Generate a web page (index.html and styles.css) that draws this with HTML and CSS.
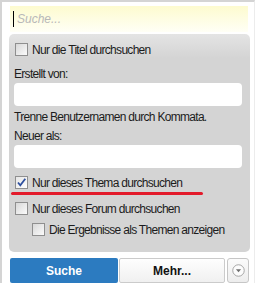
FILE: index.html
```html
<!DOCTYPE html>
<html>
<head>
<meta charset="utf-8">
<link rel="stylesheet" href="styles.css">
</head>
<body>
<div class="popup">
  <div class="search-field"><span class="caret"></span><span class="placeholder">Suche...</span></div>
  <div class="panel">
    <label class="row first"><span class="cb"></span>Nur die Titel durchsuchen</label>
    <div class="label">Erstellt von:</div>
    <div class="input"></div>
    <div class="hint">Trenne Benutzernamen durch Kommata.</div>
    <div class="label second">Neuer als:</div>
    <div class="input"></div>
    <label class="row checked-row"><span class="cb checked"><svg viewBox="0 0 13 13" width="13" height="13"><path d="M3 6.5 L5.3 9.3 L10.3 2.8" fill="none" stroke="#2d4f9e" stroke-width="1.8"/></svg></span>Nur dieses Thema durchsuchen</label>
    <div class="underline"></div>
    <label class="row forum"><span class="cb"></span>Nur dieses Forum durchsuchen</label>
    <label class="row indent"><span class="cb"></span>Die Ergebnisse als Themen anzeigen</label>
  </div>
  <div class="buttons">
    <div class="btn primary">Suche</div>
    <div class="btn secondary">Mehr...</div>
    <div class="btn arrow"><svg viewBox="0 0 14 14" width="13" height="13"><circle cx="7" cy="7" r="6.2" fill="#fcfcfc" stroke="#a0a0a0" stroke-width="1"/><path d="M4.2 5.6 L9.8 5.6 L7 8.8 Z" fill="#6e6e6e"/></svg></div>
  </div>
</div>
</body>
</html>
```
FILE: styles.css
```css
html, body {
  margin: 0;
  padding: 0;
  background: #fff;
}
body {
  font-family: "Liberation Sans", Arial, sans-serif;
  font-size: 12px;
  letter-spacing: -0.7px;
  color: #1c1c1c;
}
.popup {
  width: 255px;
  border-top: 2px solid #d4d4d4;
  border-left: 2px solid #d4d4d4;
  border-right: 1px solid #ececec;
  padding: 4px 0 0 7px;
  box-sizing: border-box;
  display: flex;
  flex-direction: column;
}
.popup > * {
  flex: none;
}
.search-field {
  width: 238px;
  height: 26px;
  margin-left: 1px;
  background: linear-gradient(#fdfbcf, #fffff6);
  display: flex;
  align-items: center;
  padding-left: 3px;
  box-sizing: border-box;
}
.caret {
  width: 1px;
  height: 16px;
  background: #000;
  margin-right: 3px;
}
.placeholder {
  font-style: italic;
  color: #b8b8b8;
  font-size: 12px;
  letter-spacing: 0;
}
.panel {
  width: 241px;
  box-sizing: border-box;
  margin-top: 2px;
  background: linear-gradient(#e4e4e4 0, #d4d4d4 24px, #d4d4d4 100%);
  border-radius: 5px;
  padding: 9px 8px 16px 5px;
  display: flex;
  flex-direction: column;
}
.row {
  display: flex;
  align-items: center;
  height: 13px;
}
.cb {
  width: 11px;
  height: 11px;
  border: 1px solid #8f8f8f;
  background: linear-gradient(135deg, #d8d8d8, #fbfbfb);
  margin: 0 4px 0 1px;
  flex: none;
  position: relative;
}
.cb.checked {
  background: linear-gradient(135deg, #e6e6e6, #fdfdfd);
}
.cb svg {
  position: absolute;
  left: -1px;
  top: -1px;
}
.label {
  margin-top: 11px;
  height: 14px;
  line-height: 14px;
}
.label.second {
  margin-top: 5px;
}
.input {
  margin-top: 2px;
  height: 23px;
  background: #fff;
  border-radius: 4px;
}
.hint {
  margin-top: 4px;
  height: 14px;
  line-height: 14px;
}
.checked-row {
  margin-top: 8px;
}
.underline {
  margin: 3px 0 0 -3px;
  width: 192px;
  height: 3px;
  border-radius: 2px;
  background: #e31b2b;
}
.forum {
  margin-top: 7px;
}
.indent {
  margin-top: 8px;
  padding-left: 17px;
}
.buttons {
  display: flex;
  margin-top: 6px;
  margin-left: 1px;
  height: 25px;
}
.btn {
  display: flex;
  align-items: center;
  justify-content: center;
  font-weight: bold;
  font-size: 12px;
  letter-spacing: 0;
  box-sizing: border-box;
  height: 25px;
}
.primary {
  width: 108px;
  background: #2c7bc0;
  color: #fff;
  border-radius: 2px;
}
.secondary {
  margin-left: 1px;
  width: 106px;
  background: linear-gradient(#fefefe, #f0f0f0);
  border: 1px solid #cbcbcb;
  border-radius: 2px;
  color: #111;
}
.arrow {
  margin-left: 2px;
  width: 22px;
  border: 1px solid #c6c6c6;
  border-radius: 3px;
  background: linear-gradient(#fbfbfb, #ededed);
}
```
